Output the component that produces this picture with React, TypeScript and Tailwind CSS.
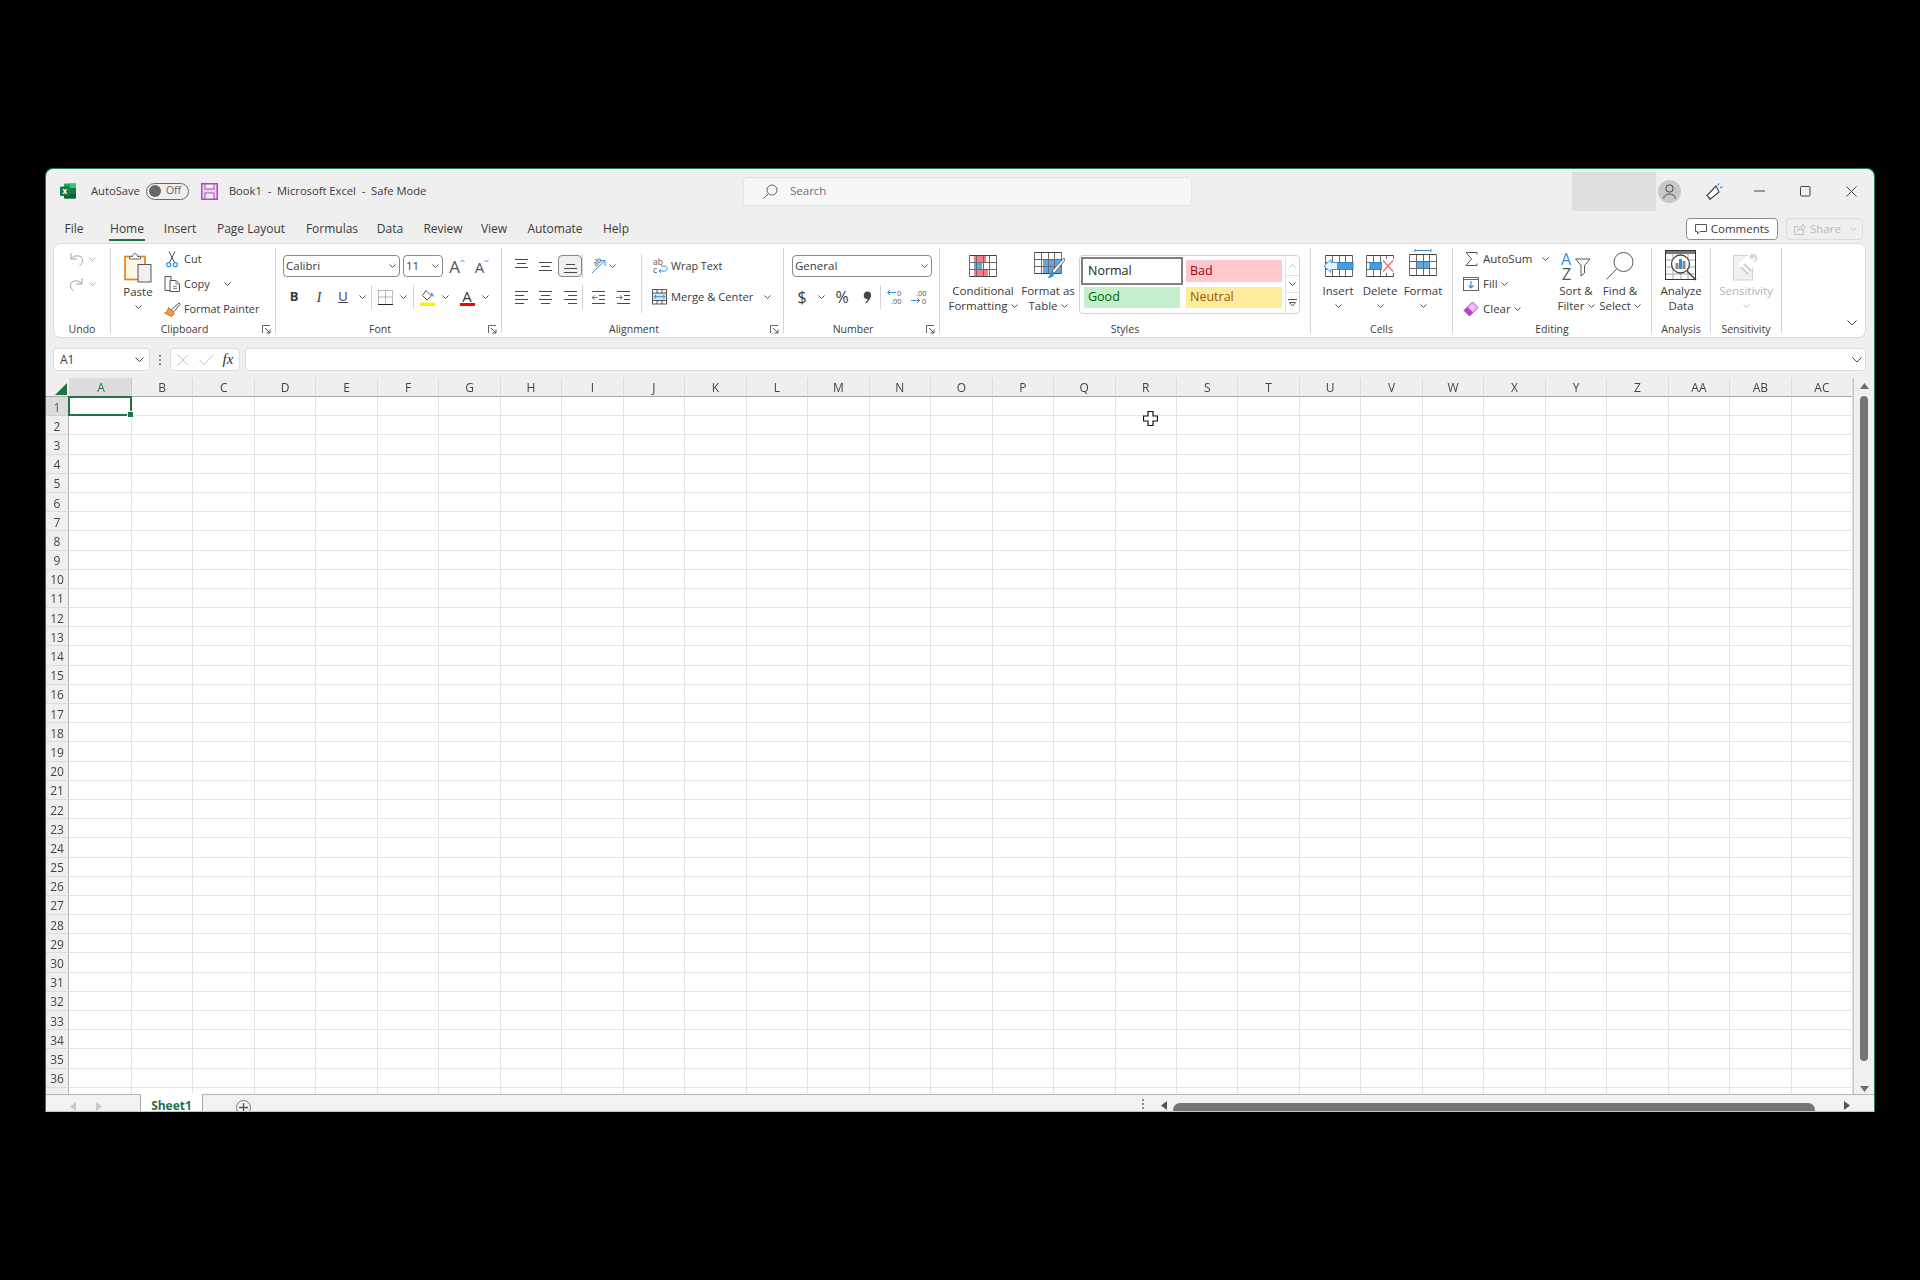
import React from "react";

const Chev = ({ c = "#555" }: { c?: string }) => (
  <svg width="7" height="4" viewBox="0 0 7 4" fill="none" className="shrink-0"><path d="M.5.5l3 3 3-3" stroke={c} /></svg>
);

const Slot = ({ className = "", children }: { className?: string; children?: React.ReactNode }) => (
  <div className={"flex items-center justify-center shrink-0 h-full " + className}>{children}</div>
);

const Sep = () => <div className="w-px h-[24px] bg-[#d4d4d4] shrink-0 self-center" />;

const Launcher = () => (
  <svg width="9" height="9" viewBox="0 0 9 9" fill="none" className="absolute right-[4px] bottom-[-1px]">
    <path d="M.5 8V.5H8" stroke="#666" /><path d="M3 3l5 5M8 4.5V8H4.5" stroke="#555" />
  </svg>
);

const Group = ({ w, label, launcher, children }: { w: string; label: string; launcher?: boolean; children: React.ReactNode }) => (
  <div className={"relative flex flex-col h-[85px] shrink-0 border-r border-[#d6d6d6] " + w}>
    <div className="flex h-[74px] shrink-0">{children}</div>
    <div className={"h-[16px] shrink-0 text-center text-[10.5px] leading-[15px] text-[#3a3a3a] " + (launcher ? "pr-[17px]" : "")}>{label}</div>
    {launcher && <Launcher />}
  </div>
);

const Big = ({ w, icon, lines, chev, muted }: { w: string; icon: React.ReactNode; lines: React.ReactNode[]; chev?: boolean; muted?: boolean }) => (
  <div className={"flex flex-col items-center shrink-0 whitespace-nowrap text-[11.5px] leading-[15px] " + w + (muted ? " text-[#b4b4b4]" : " text-[#3a3a3a]")}>
    <div className="h-[35px] flex items-center justify-center">{icon}</div>
    {lines.map((l, i) => <div key={i} className="flex items-center gap-[3px]">{l}</div>)}
    {chev && <div className="h-[15px] flex items-center"><Chev c={muted ? "#c0c0c0" : "#555"} /></div>}
  </div>
);

const SmallRow = ({ icon, text, children, className = "text-[11.5px]" }: { icon: React.ReactNode; text: string; children?: React.ReactNode; className?: string }) => (
  <div className={"flex items-center h-[22px] whitespace-nowrap text-[#3a3a3a] " + className}>
    <div className="w-[18px] flex justify-center shrink-0">{icon}</div>
    <span className="ml-[3px]">{text}</span>
    {children}
  </div>
);

const Lines = ({ rows }: { rows: [number, number, number][] }) => (
  <svg width="15" height="16" viewBox="0 0 15 16" fill="none">
    {rows.map(([x, y, l], i) => <path key={i} d={`M${x} ${y + 0.5}h${l}`} stroke="#4a4a4a" />)}
  </svg>
);

const Excel = () => (
  <svg width="17" height="16" viewBox="0 0 17 16">
    <rect x="4" y="0.5" width="12" height="15" rx="1" fill="#21A366" />
    <path d="M10 .5h5a1 1 0 011 1V5h-6z" fill="#33C481" />
    <path d="M4 11h12v3.500a1 1 0 01-1 1H5a1 1 0 01-1-1z" fill="#185C37" />
    <rect x="10" y="5" width="6" height="6" fill="#107C41" />
    <rect x="0" y="3.500" width="9.500" height="9.500" rx="1" fill="#107C41" />
    <text x="4.700" y="11" textAnchor="middle" fontSize="8" fontWeight="700" fill="#fff" fontFamily="Open Sans">x</text>
  </svg>
);

const Save = () => (
  <svg width="17" height="17" viewBox="0 0 17 17" fill="none">
    <rect x=".75" y=".75" width="15.500" height="15.500" fill="#EBD3F0" stroke="#B146C2" strokeWidth="1.500" />
    <rect x="4" y="1" width="9" height="5" fill="#F6EBF8" stroke="#B146C2" />
    <rect x="4" y="10" width="9" height="6" fill="#F6EBF8" stroke="#B146C2" />
  </svg>
);

const Undo = ({ flip }: { flip?: boolean }) => (
  <svg width="17" height="17" viewBox="0 0 17 17" fill="none" className={flip ? "-scale-x-100" : ""}>
    <path d="M3 2v6h6" stroke="#a0a0a0" />
    <path d="M3 8c3-4.500 11-4.500 11.500 1.500.1 2-1 3.500-3 5.500" stroke="#a0a0a0" />
  </svg>
);

const Paste = () => (
  <svg width="28" height="31" viewBox="0 0 28 31" fill="none">
    <rect x="1" y="4.500" width="20" height="23" fill="#FFF6E8" stroke="#E8821E" strokeWidth="1.700" />
    <path d="M5.500 7V4.500H8.500c0-4 5-4 5 0H16.500V7z" fill="#fff" stroke="#666" />
    <rect x="14" y="12.500" width="13" height="17.500" fill="#F0F0F0" stroke="#555" />
  </svg>
);

const Cut = () => (
  <svg width="12" height="17" viewBox="0 0 12 17" fill="none">
    <path d="M3 .5l5.500 11M9 .5L3.500 11.500" stroke="#555" />
    <circle cx="2.700" cy="13.700" r="2" stroke="#2F8FDC" strokeWidth="1.200" />
    <circle cx="9.300" cy="13.700" r="2" stroke="#2F8FDC" strokeWidth="1.200" />
  </svg>
);

const Copy = () => (
  <svg width="17" height="16" viewBox="0 0 17 16" fill="none">
    <path d="M1 .5h6v14H1z" stroke="#555" fill="#fff" />
    <path d="M6 4.500h6l3.500 3.500v7.500H6z" stroke="#555" fill="#fff" />
    <path d="M12 4.500V8h3.500M9 10.500h4M9 12.500h4" stroke="#888" />
  </svg>
);

const Painter = () => (
  <svg width="17" height="15" viewBox="0 0 17 15" fill="none">
    <path d="M7 8l8-7 1.200 1.200L9.500 10z" fill="#fff" stroke="#555" />
    <path d="M4.500 5.500l6 6-3 3-7-3.500c2.500-.5 3.300-3 4-5.500z" fill="#F39A3B" stroke="#D9761A" />
  </svg>
);

const GrowA = ({ up }: { up?: boolean }) => (
  <div className="flex items-start text-[#555] leading-none">
    <span className={up ? "text-[17px]" : "text-[15px] mt-[2px]"}>A</span>
    <svg width="5" height="4" viewBox="0 0 5 4" fill="none" className="mt-[1px]">
      <path d={up ? "M.5 3L2.500 1l2 2" : "M.5 1l2 2 2-2"} stroke="#3B8FD6" />
    </svg>
  </div>
);

const Borders = () => (
  <svg width="15" height="15" viewBox="0 0 15 15" fill="none">
    <path d="M.5.5h14v13M.5.5v13M7.500.5v13M.5 7h14" stroke="#777" strokeDasharray="1 1" />
    <path d="M0 14.500h15" stroke="#222" />
  </svg>
);

const Fill = () => (
  <svg width="16" height="17" viewBox="0 0 16 17" fill="none">
    <path d="M6 1.500l5.500 5.500-4.500 4-4.500-4.500z" fill="#fff" stroke="#555" />
    <path d="M11 3.500c2 1 3 2.500 2.500 4.500-.8-1-1.500-2-2.500-2.500z" fill="#2F8FDC" />
    <rect x="0" y="13.500" width="15" height="3.500" fill="#FFF200" />
  </svg>
);

const Indent = ({ inc }: { inc?: boolean }) => (
  <svg width="15" height="13" viewBox="0 0 15 13" fill="none">
    <path d="M1 .5h13M1 12.500h13M8 4.500h6M8 8.500h6" stroke="#4a4a4a" />
    <path d={inc ? "M0 6.500h6M4 4.500l2.500 2-2.500 2" : "M6.500 6.500H1M3.500 4.500L1 6.500l2.500 2"} stroke="#2F8FDC" />
  </svg>
);

const Orient = () => (
  <svg width="17" height="16" viewBox="0 0 17 16" fill="none" className="overflow-visible">
    <text x="5" y="9" fontSize="8" fill="#555" fontFamily="Open Sans" transform="rotate(-45 6 7)">ab</text>
    <path d="M3 15L15.500 3M10.500 2.500h5.500V8" stroke="#2F8FDC" />
  </svg>
);

const Wrap = () => (
  <svg width="15" height="16" viewBox="0 0 15 16" fill="none" className="overflow-visible">
    <text x="0" y="7" fontSize="8.500" fill="#555" fontFamily="Open Sans">ab</text>
    <text x="0" y="15" fontSize="8.500" fill="#555" fontFamily="Open Sans">c</text>
    <path d="M6 13h5.500c3.500 0 3.500-5 0-5H8M8 11l-2 2 2 2" stroke="#2F8FDC" />
  </svg>
);

const Merge = () => (
  <svg width="16" height="16" viewBox="0 0 16 16" fill="none">
    <rect x=".5" y=".5" width="14" height="14.500" fill="#fff" stroke="#555" />
    <rect x="1" y="4" width="13" height="7.500" fill="#CFE6F8" />
    <path d="M.5 4h14M.5 11.500h14M5 .5V4M10 .5V4M5 11.500V15M10 11.500V15" stroke="#555" />
    <path d="M2 7.700h11M4 6L2 7.700l2 1.800M11 6l2 1.700-2 1.800" stroke="#2F8FDC" />
  </svg>
);

const Decimal = ({ inc }: { inc?: boolean }) => (
  <svg width="17" height="16" viewBox="0 0 17 16" fill="none" className="overflow-visible">
    {inc ? (
      <>
        <path d="M10 3.500H1.500M4 1L1.500 3.500 4 6" stroke="#2F8FDC" />
        <text x="11" y="6.500" fontSize="7.500" fill="#555" fontFamily="Open Sans">0</text>
        <text x="5" y="14.500" fontSize="7.500" fill="#555" fontFamily="Open Sans">.00</text>
      </>
    ) : (
      <>
        <text x="5" y="6.500" fontSize="7.500" fill="#555" fontFamily="Open Sans">.00</text>
        <path d="M0 11.500h8.500M6 9l2.500 2.500L6 14" stroke="#2F8FDC" />
        <text x="11" y="14.500" fontSize="7.500" fill="#555" fontFamily="Open Sans">0</text>
      </>
    )}
  </svg>
);

const Comma = () => (
  <svg width="9" height="13" viewBox="0 0 9 13"><path d="M4 .5c3-.3 4.500 1.800 4 4.500-.4 2.700-2.500 5.500-5 7.500l-.8-.7C3.500 10.500 4.500 9.200 4.700 8 2.300 8.500.5 6.800.7 4.500.9 2 2.200.7 4 .5z" fill="#444" /></svg>
);

const GridLines = ({ w, h }: { w: number; h: number }) => {
  const xs = [0, 1, 2, 3, 4].map((i) => Math.round((i * (w - 1)) / 4) + 0.5);
  const ys = [0, 1, 2, 3].map((i) => Math.round((i * (h - 1)) / 3) + 0.5);
  return (
    <>
      {xs.map((x) => <path key={"x" + x} d={`M${x} .5V${h - 0.5}`} stroke="#6a6a6a" />)}
      {ys.map((y) => <path key={"y" + y} d={`M.5 ${y}H${w - 0.5}`} stroke={y === 0.5 || y === h - 0.5 ? "#444" : "#6a6a6a"} />)}
    </>
  );
};

const CondFmt = () => (
  <svg width="28" height="22" viewBox="0 0 28 22" fill="none">
    <rect x="5" y="0" width="12" height="7.500" fill="#F47C85" />
    <rect x="5" y="7.500" width="8" height="7" fill="#5CA8E6" />
    <rect x="5" y="14.500" width="14" height="7.500" fill="#F47C85" />
    <GridLines w={28} h={22} />
  </svg>
);

const FmtTable = () => (
  <svg width="31" height="27" viewBox="0 0 31 27" fill="none">
    <rect x="9" y="7" width="19" height="14" fill="#5CA8E6" />
    <GridLines w={28} h={22} />
    <path d="M30 6L18 19l2.500 2L31 8z" fill="#fff" stroke="#666" />
    <path d="M17.500 19.500l3 2.500c-.8 2.500-3.500 4.500-7 4 1.700-1 2.200-4.500 4-6.500z" fill="#3B8FD6" />
  </svg>
);

const InsertIco = () => (
  <svg width="31" height="22" viewBox="0 0 31 22" fill="none">
    <g transform="translate(2 0)"><GridLines w={28} h={22} /></g>
    <rect x="8" y="7.500" width="22" height="7" fill="#4C9BE0" stroke="#2F7FC4" />
    <path d="M14 7.500H8V4.500L1 11l7 6.500V14.500h6" fill="#E4F1FC" stroke="#4C9BE0" />
  </svg>
);

const DeleteIco = () => (
  <svg width="28" height="22" viewBox="0 0 28 22" fill="none">
    <GridLines w={28} h={22} />
    <rect x="4" y="7.500" width="13" height="7" fill="#4C9BE0" stroke="#2F7FC4" />
    <rect x="16" y="4" width="12" height="14" fill="#fff" />
    <path d="M17 5.500l10 11M27 5.500l-10 11" stroke="#F26A6A" strokeWidth="1.300" />
  </svg>
);

const FormatIco = () => (
  <svg width="28" height="27" viewBox="0 0 28 27" fill="none">
    <path d="M6 1.500h16M6 0v3M22 0v3" stroke="#3B8FD6" />
    <g transform="translate(0 5)">
      <rect x="7" y="7" width="14" height="7.500" fill="#5CA8E6" />
      <GridLines w={28} h={22} />
    </g>
  </svg>
);

const Sigma = () => (
  <svg width="13" height="14" viewBox="0 0 13 14" fill="none"><path d="M12 2.500V.5H1l5.500 6.500L1 13.500h11v-2" stroke="#555" /></svg>
);

const FillIco = () => (
  <svg width="16" height="14" viewBox="0 0 16 14" fill="none">
    <rect x=".5" y=".5" width="15" height="13" fill="#fff" stroke="#666" />
    <path d="M.5 2.500h15" stroke="#666" />
    <path d="M8 4v7M5.500 8.500L8 11l2.500-2.500" stroke="#2F8FDC" strokeWidth="1.200" />
  </svg>
);

const Eraser = () => (
  <svg width="16" height="16" viewBox="0 0 16 16" fill="none">
    <path d="M9.500 1L15 6.500 6.500 15 1 9.500z" fill="#E8BFEE" stroke="#B146C2" />
    <path d="M1 9.500L6.500 15l3.500-3.500L4.500 6z" fill="#B146C2" />
  </svg>
);

const SortIco = () => (
  <svg width="30" height="29" viewBox="0 0 30 29" fill="none" className="overflow-visible">
    <text x="0" y="14" fontSize="16" fill="#2F8FDC" fontFamily="Open Sans">A</text>
    <text x="1" y="28.500" fontSize="16" fill="#555" fontFamily="Open Sans">Z</text>
    <path d="M14.500 8h14.500l-5.500 6.500V22l-3.500 3V14.500z" fill="#fff" stroke="#555" />
  </svg>
);

const FindIco = () => (
  <svg width="30" height="30" viewBox="0 0 30 30" fill="none">
    <circle cx="18.500" cy="11" r="9.500" fill="#fff" stroke="#555" />
    <path d="M11.500 18L1.500 28.500" stroke="#555" />
  </svg>
);

const AnalyzeIco = () => (
  <svg width="32" height="31" viewBox="0 0 32 31" fill="none">
    <rect x=".5" y=".5" width="30" height="29" fill="#fff" stroke="#333" />
    <rect x="1" y="1" width="29" height="3" fill="#777" />
    <path d="M1 10h29M1 17h29M1 24h29M8 4v25M16 4v25M23 4v25" stroke="#aaa" />
    <circle cx="15.500" cy="14" r="9" fill="#fff" stroke="#444" strokeWidth="1.300" />
    <rect x="10.500" y="13" width="3" height="6" fill="#8a8a8a" />
    <rect x="14" y="9" width="3" height="10" fill="#2F8FDC" />
    <rect x="17.500" y="11" width="3" height="8" fill="#8a8a8a" />
    <path d="M22 21l9 9" stroke="#444" strokeWidth="1.500" />
  </svg>
);

const SensIco = () => (
  <svg width="27" height="30" viewBox="0 0 27 30" fill="none">
    <rect x=".5" y="4.500" width="19" height="24.500" fill="#f1f1f1" stroke="#d2d2d2" />
    <path d="M5 13l12-10 9 8-12 11z" fill="#fff" />
    <path d="M8 16l7 7M11 13l7 7" stroke="#d0d0d0" strokeWidth="2" />
    <path d="M16 6c2-4 5-4 7-2s2 5-1 7z" fill="#d8d8d8" />
    <path d="M19 10l3-3" stroke="#fff" strokeWidth="2" />
  </svg>
);

const Feedback = () => (
  <svg width="17" height="19" viewBox="0 0 17 19" fill="none">
    <path d="M1 13.500L10 4l3 6-8.500 7z" fill="#fff" stroke="#444" strokeWidth="1.100" />
    <path d="M3 15.500c-.5 1 .2 2 1.500 1.800" stroke="#444" />
    <path d="M12 3.500l1-2M14 6l2.500-1.500" stroke="#2F8FDC" strokeWidth="1.300" />
  </svg>
);

const Tri = ({ dir, c = "#6e6e6e" }: { dir: "u" | "d" | "l" | "r"; c?: string }) => {
  const p = { u: "M0 6L4.500 0 9 6z", d: "M0 0h9L4.500 6z", l: "M6 0v9L0 4.500z", r: "M0 0v9l6-4.500z" }[dir];
  const v = dir === "u" || dir === "d" ? ["9", "6"] : ["6", "9"];
  return <svg width={v[0]} height={v[1]} viewBox={`0 0 ${v[0]} ${v[1]}`} className="shrink-0"><path d={p} fill={c} /></svg>;
};

const tabs: [string, string][] = [
  ["File", "w-[44px]"], ["Home", "w-[62px]"], ["Insert", "w-[44px]"], ["Page Layout", "w-[98px]"], ["Formulas", "w-[64px]"],
  ["Data", "w-[52px]"], ["Review", "w-[54px]"], ["View", "w-[48px]"], ["Automate", "w-[74px]"], ["Help", "w-[48px]"],
];

const cols = ["A","B","C","D","E","F","G","H","I","J","K","L","M","N","O","P","Q","R","S","T","U","V","W","X","Y","Z","AA","AB","AC"];
const rows = Array.from({ length: 37 }, (_, i) => i + 1);

const StyleCell = ({ className, children }: { className: string; children: string }) => (
  <div className={"flex items-center pl-[4px] text-[12.5px] " + className}>{children}</div>
);

export default function App() {
  return (
    <div className="h-[1280px] overflow-hidden bg-black pt-[168px] pl-[45px] font-['Open_Sans','Liberation_Sans',sans-serif] text-[#3a3a3a]">
      <div className="relative w-[1830px] h-[944px] flex flex-col overflow-hidden rounded-t-[8px] border border-[#1f7a4c] border-b-[#c4c4c4] bg-[#efefef] blur-[0.35px]">
        {/* Title bar */}
        <div className="flex items-center h-[44px] shrink-0 text-[11.2px]">
          <div className="flex items-center w-[697px] shrink-0 whitespace-nowrap">
            <div className="ml-[14px]"><Excel /></div>
            <span className="ml-[14px]">AutoSave</span>
            <div className="ml-[6px] flex items-center w-[43px] h-[17px] rounded-full border border-[#666] pl-[2px]">
              <div className="w-[12px] h-[12px] rounded-full bg-[#666]" />
              <span className="ml-[5px] text-[10.5px] text-[#666]">Off</span>
            </div>
            <div className="ml-[12px]"><Save /></div>
            <span className="ml-[11px] whitespace-pre">Book1  -  Microsoft Excel  -  Safe Mode</span>
          </div>
          <div className="flex items-center w-[449px] h-[29px] shrink-0 rounded-[4px] border border-[#e4e4e4] bg-[#f7f7f7] pl-[19px] text-[#6e6e6e] text-[11.5px]">
            <svg width="15" height="15" viewBox="0 0 15 15" fill="none"><circle cx="9" cy="6" r="5" stroke="#666" /><path d="M5.500 9.500L.7 14.300" stroke="#666" /></svg>
            <span className="ml-[12px]">Search</span>
          </div>
          <div className="flex-1" />
          <div className="w-[84px] h-[39px] bg-[#dedede]" />
          <div className="ml-[2px] w-[23px] h-[23px] rounded-full bg-[#c8c8c8] flex items-center justify-center">
            <svg width="13" height="15" viewBox="0 0 13 15" fill="none"><circle cx="6.500" cy="4.500" r="3.700" stroke="#444" /><path d="M.7 14.500c.3-6 11.300-6 11.600 0" stroke="#444" /></svg>
          </div>
          <Slot className="w-[44px] ml-[11px]"><Feedback /></Slot>
          <Slot className="w-[46px]"><svg width="11" height="2"><path d="M0 1h11" stroke="#444" /></svg></Slot>
          <Slot className="w-[46px]"><svg width="11" height="11" fill="none"><rect x=".5" y=".5" width="9.500" height="9.500" rx="1" stroke="#444" /></svg></Slot>
          <Slot className="w-[46px]"><svg width="11" height="11" fill="none"><path d="M.5.500l10 10M10.500.500l-10 10" stroke="#444" /></svg></Slot>
        </div>

        {/* Tabs */}
        <div className="flex items-center h-[30px] shrink-0 pl-[6px] pt-[2px] text-[12px]">
          {tabs.map(([t, w]) => (
            <div key={t} className={"relative flex justify-center whitespace-nowrap " + w}>
              {t}
              {t === "Home" && <div className="absolute left-[13px] right-[13px] bottom-[-3px] h-[2px] bg-[#217346]" />}
            </div>
          ))}
          <div className="flex-1" />
          <div className="flex items-center justify-center gap-[4px] w-[92px] h-[22px] rounded-[4px] border border-[#8e8e8e] bg-white text-[11.5px]">
            <svg width="12" height="11" viewBox="0 0 12 11" fill="none"><path d="M.5.500h11v7H5L2.500 10V7.500h-2z" stroke="#555" /></svg>
            Comments
          </div>
          <div className="ml-[8px] mr-[11px] flex items-center w-[77px] h-[22px] rounded-[4px] border border-[#dcdcdc] pl-[7px] text-[11.5px] text-[#b8b8b8]">
            <svg width="12" height="12" viewBox="0 0 12 12" fill="none"><path d="M.5 3.500h4M.5 3.500v8h9V8M3.500 8c.5-3 3-4.500 5-4.500V1l3 3.500-3 3.500V5.800C7 5.800 5 6.500 3.500 8z" stroke="#c0c0c0" /></svg>
            <span className="ml-[4px]">Share</span>
            <div className="ml-[9px]"><Chev c="#c0c0c0" /></div>
          </div>
        </div>

        {/* Ribbon */}
        <div className="flex h-[95px] shrink-0 mx-[7px] w-[1813px] rounded-[8px] border border-[#dcdcdc] bg-white pt-[4px]">
          <Group w="w-[57px]" label="Undo">
            <div className="flex flex-col gap-[3px] pl-[13px]">
              <div className="flex items-center h-[22px]"><Slot className="w-[18px]"><Undo /></Slot><Slot className="w-[14px]"><Chev c="#b0b0b0" /></Slot></div>
              <div className="flex items-center h-[22px]"><Slot className="w-[18px]"><Undo flip /></Slot><Slot className="w-[14px]"><Chev c="#b0b0b0" /></Slot></div>
            </div>
          </Group>

          <Group w="w-[165px]" label="Clipboard" launcher>
            <div className="flex flex-col items-center w-[52px] shrink-0 pt-[4px] pl-[2px] text-[11.5px] leading-[16px]">
              <Paste />
              <div className="mt-[1px]">Paste</div>
              <div className="mt-[5px]"><Chev /></div>
            </div>
            <div className="flex flex-col gap-[3px]">
              <SmallRow className="text-[11px]" icon={<Cut />} text="Cut" />
              <SmallRow className="text-[11px]" icon={<Copy />} text="Copy"><div className="ml-[14px]"><Chev /></div></SmallRow>
              <SmallRow className="text-[10.8px]" icon={<Painter />} text="Format Painter" />
            </div>
          </Group>

          <Group w="w-[226px]" label="Font" launcher>
            <div className="flex flex-col gap-[9px] pt-[7px]">
              <div className="flex h-[22px]">
                <div className="ml-[7px] flex items-center justify-between w-[117px] rounded-[4px] border border-[#8a8a8a] pl-[2px] pr-[3px] text-[11.5px]">Calibri<Chev /></div>
                <div className="ml-[3px] flex items-center justify-between w-[40px] rounded-[4px] border border-[#8a8a8a] pl-[2px] pr-[3px] text-[11.5px]">11<Chev /></div>
                <Slot className="w-[28px]"><GrowA up /></Slot>
                <Slot className="w-[22px]"><GrowA /></Slot>
              </div>
              <div className="flex h-[22px] pl-[7px]">
                <Slot className="w-[22px] font-bold text-[13px]">B</Slot>
                <Slot className="w-[28px] italic text-[14px] font-['Liberation_Serif',serif]">I</Slot>
                <Slot className="w-[20px] underline text-[13px]">U</Slot>
                <Slot className="w-[18px]"><Chev /></Slot>
                <Sep />
                <Slot className="w-[26px]"><Borders /></Slot>
                <Slot className="w-[10px] mr-[5px]"><Chev /></Slot>
                <Sep />
                <Slot className="w-[28px]"><Fill /></Slot>
                <Slot className="w-[6px] mr-[7px]"><Chev /></Slot>
                <Slot className="w-[24px]">
                  <div className="flex flex-col items-center w-[15px] leading-none text-[15px]">
                    <span className="h-[13px]">A</span>
                    <div className="w-[15px] h-[3px] mt-[1px] bg-[#f00]" />
                  </div>
                </Slot>
                <Slot className="w-[12px]"><Chev /></Slot>
              </div>
            </div>
          </Group>

          <Group w="w-[282px]" label="Alignment" launcher>
            <div className="flex flex-col gap-[9px] pt-[7px] pl-[7px] w-[132px] shrink-0">
              <div className="flex h-[22px]">
                <Slot className="w-[24px]"><Lines rows={[[1, 1, 13], [3, 5, 9], [1, 9, 13]]} /></Slot>
                <Slot className="w-[25px]"><Lines rows={[[1, 4, 13], [3, 8, 9], [1, 12, 13]]} /></Slot>
                <Slot className="w-[24px] rounded-[4px] border border-[#888] bg-[#f0f0f0]"><Lines rows={[[3, 6, 9], [1, 10, 13], [1, 14, 13]]} /></Slot>
                <Sep />
                <Slot className="w-[20px] ml-[4px]"><Orient /></Slot>
                <Slot className="w-[10px]"><Chev /></Slot>
              </div>
              <div className="flex h-[22px]">
                <Slot className="w-[24px]"><Lines rows={[[1, 2, 13], [1, 6, 9], [1, 10, 13], [1, 14, 9]]} /></Slot>
                <Slot className="w-[25px]"><Lines rows={[[1, 2, 13], [3, 6, 9], [1, 10, 13], [3, 14, 9]]} /></Slot>
                <Slot className="w-[24px]"><Lines rows={[[1, 2, 13], [5, 6, 9], [1, 10, 13], [5, 14, 9]]} /></Slot>
                <Sep />
                <Slot className="w-[24px] ml-[3px]"><Indent /></Slot>
                <Slot className="w-[24px] ml-[1px]"><Indent inc /></Slot>
              </div>
            </div>
            <div className="w-px h-[59px] mt-[6px] ml-[7px] bg-[#d4d4d4] shrink-0" />
            <div className="flex flex-col gap-[9px] pt-[7px] pl-[9px] text-[10.8px] whitespace-nowrap">
              <div className="flex items-center h-[22px]"><Slot className="w-[18px]"><Wrap /></Slot><span className="ml-[2px]">Wrap Text</span></div>
              <div className="flex items-center h-[22px]"><Slot className="w-[18px]"><Merge /></Slot><span className="ml-[2px] text-[11.2px]">Merge &amp; Center</span><div className="ml-[11px]"><Chev /></div></div>
            </div>
          </Group>

          <Group w="w-[156px]" label="Number" launcher>
            <div className="flex flex-col gap-[9px] pt-[7px] pl-[8px]">
              <div className="flex items-center justify-between w-[140px] h-[22px] rounded-[4px] border border-[#8a8a8a] pl-[2px] pr-[3px] text-[11.5px]">General<Chev /></div>
              <div className="flex h-[22px]">
                <Slot className="w-[20px] text-[16px]">$</Slot>
                <Slot className="w-[18px]"><Chev /></Slot>
                <Slot className="w-[24px] text-[16px]">%</Slot>
                <Slot className="w-[26px]"><Comma /></Slot>
                <Sep />
                <Slot className="w-[26px]"><Decimal inc /></Slot>
                <Slot className="w-[24px]"><Decimal /></Slot>
              </div>
            </div>
          </Group>

          <Group w="w-[371px]" label="Styles">
            <Big w="w-[86px]" icon={<CondFmt />} lines={["Conditional", <>Formatting <Chev /></>]} />
            <Big w="w-[44px]" icon={<div className="ml-[3px]"><FmtTable /></div>} lines={["Format as", <>Table <Chev /></>]} />
            <div className="ml-[9px] mt-[7px] flex w-[221px] h-[59px] shrink-0 rounded-[4px] border border-[#d0d0d0]">
              <div className="grid grid-cols-[96px_96px] grid-rows-[22px_21px] gap-x-[6px] gap-y-[5px] pl-[4px] pt-[4px]">
                <StyleCell className="bg-white text-[#222] outline-2 outline-offset-[1px] outline-[#808080]">Normal</StyleCell>
                <StyleCell className="bg-[#FFC7CE] text-[#9C0006]">Bad</StyleCell>
                <StyleCell className="bg-[#C6EFCE] text-[#006100]">Good</StyleCell>
                <StyleCell className="bg-[#FFEB9C] text-[#9C5700]">Neutral</StyleCell>
              </div>
              <div className="ml-[3px] flex-1 flex flex-col border-l border-[#e2e2e2]">
                <div className="flex items-center justify-center h-[19px] shrink-0"><svg width="7" height="4" viewBox="0 0 7 4" fill="none"><path d="M.5 3.500l3-3 3 3" stroke="#c0c0c0" /></svg></div>
                <div className="flex items-center justify-center h-[18px] shrink-0 border-y border-[#e2e2e2]"><Chev /></div>
                <div className="flex items-center justify-center flex-1">
                  <svg width="9" height="8" viewBox="0 0 9 8" fill="none"><path d="M0 .5h9M1.500 3.500l3 3.500 3-3.500z" stroke="#555" /></svg>
                </div>
              </div>
            </div>
          </Group>

          <Group w="w-[142px]" label="Cells">
            <Big w="w-[54px]" icon={<InsertIco />} lines={["Insert"]} chev />
            <Big w="w-[30px]" icon={<DeleteIco />} lines={["Delete"]} chev />
            <Big w="w-[56px]" icon={<div className="-mt-[6px]"><FormatIco /></div>} lines={["Format"]} chev />
          </Group>

          <Group w="w-[199px]" label="Editing">
            <div className="flex flex-col gap-[3px] pl-[9px] w-[96px] shrink-0">
              <SmallRow icon={<Sigma />} text="AutoSum"><div className="ml-auto"><Chev /></div></SmallRow>
              <SmallRow icon={<FillIco />} text="Fill"><div className="ml-[3px]"><Chev /></div></SmallRow>
              <SmallRow icon={<Eraser />} text="Clear"><div className="ml-[3px]"><Chev /></div></SmallRow>
            </div>
            <Big w="w-[54px]" icon={<SortIco />} lines={["Sort &", <>Filter <Chev /></>]} />
            <Big w="w-[34px]" icon={<FindIco />} lines={["Find &", <>Select <Chev /></>]} />
          </Group>

          <Group w="w-[59px]" label="Analysis">
            <Big w="w-[58px]" icon={<AnalyzeIco />} lines={["Analyze", "Data"]} />
          </Group>

          <Group w="w-[71px]" label="Sensitivity">
            <Big w="w-[70px]" muted icon={<SensIco />} lines={["Sensitivity"]} chev />
          </Group>

          <div className="flex-1 flex justify-end items-end pr-[8px] pb-[7px] h-[85px]">
            <svg width="10" height="6" viewBox="0 0 10 6" fill="none"><path d="M.5.500L5 5 9.500.500" stroke="#444" /></svg>
          </div>
        </div>

        {/* Formula bar */}
        <div className="flex h-[23px] mt-[10px] mb-[7px] shrink-0 pl-[7px] pr-[8px]">
          <div className="flex items-center justify-between w-[97px] rounded-[4px] border border-[#dcdcdc] bg-white pl-[6px] pr-[5px] text-[12px]">
            A1
            <svg width="9" height="5" viewBox="0 0 9 5" fill="none"><path d="M.5.500l4 4 4-4" stroke="#444" /></svg>
          </div>
          <Slot className="w-[20px]"><svg width="2" height="10"><path d="M1 0v2M1 4v2M1 8v2" stroke="#888" strokeWidth="2" /></svg></Slot>
          <div className="flex items-center w-[70px] rounded-[4px] border border-[#dcdcdc] bg-white">
            <Slot className="w-[24px]"><svg width="12" height="12" fill="none"><path d="M.5.500l11 11M11.500.500l-11 11" stroke="#c4c4c4" /></svg></Slot>
            <Slot className="w-[22px]"><svg width="15" height="11" fill="none"><path d="M.5 6l4.500 4.500L14.500.500" stroke="#c4c4c4" /></svg></Slot>
            <Slot className="w-[22px] italic text-[15px] font-['Liberation_Serif',serif] text-[#333]">fx</Slot>
          </div>
          <div className="ml-[5px] flex-1 flex items-center justify-end rounded-[4px] border border-[#dcdcdc] bg-white pr-[3px]">
            <svg width="10" height="6" viewBox="0 0 10 6" fill="none"><path d="M.5.500L5 5 9.500.500" stroke="#444" /></svg>
          </div>
        </div>

        {/* Sheet */}
        <div className="flex h-[716px] shrink-0">
          <div className="w-[1807px] shrink-0 overflow-hidden bg-white grid grid-cols-[23px_63px_repeat(28,61.47px)] grid-rows-[19px_repeat(37,19.2px)]">
            <div className="bg-[#efefef] flex items-end justify-end pr-[2px] pb-[1px] border-b border-[#a8a8a8]">
              <svg width="12" height="12" viewBox="0 0 12 12"><path d="M12 0v12H0z" fill="#217346" /></svg>
            </div>
            {cols.map((c, i) => (
              <div key={c} className={"flex items-center justify-center pt-[2px] text-[12px] border-b border-r " + (i === 0 ? "pl-[2px] bg-[#dcdcdc] text-[#217346] border-b-[#a8a8a8] border-r-[#c8c8c8]" : "bg-[#efefef] text-[#444] border-b-[#a8a8a8] border-r-[#dcdcdc]")}>{c}</div>
            ))}
            {rows.map((r) => (
              <React.Fragment key={r}>
                <div className={"flex items-center justify-center pt-[3px] text-[12px] border-r border-b border-r-[#b4b4b4] " + (r === 1 ? "bg-[#dcdcdc] text-[#217346] border-b-[#d0d0d0]" : "bg-[#efefef] text-[#444] border-b-[#dcdcdc]")}>{r === 37 ? "" : r}</div>
                {cols.map((c, i) => (
                  <div key={c} className={"border-r border-b border-[#e3e3e3] " + (r === 1 && i === 0 ? "relative" : "")}>
                    {r === 1 && i === 0 && (
                      <div className="absolute -inset-px border-2 border-[#217346]">
                        <div className="absolute -right-[3px] -bottom-[3px] w-[5px] h-[5px] bg-[#217346] outline outline-white" />
                      </div>
                    )}
                  </div>
                ))}
              </React.Fragment>
            ))}
          </div>
          <div className="flex-1 flex flex-col items-center border-l border-[#c8c8c8] bg-[#f0f0f0]">
            <div className="mt-[5px]"><Tri dir="u" /></div>
            <div className="mt-[7px] w-[8px] h-[665px] rounded-full bg-[#757575]" />
            <div className="mt-[25px]"><Tri dir="d" /></div>
          </div>
        </div>

        {/* Sheet tabs */}
        <div className="flex flex-1 items-stretch bg-[#f2f2f2] border-t border-[#b4b4b4]">
          <div className="flex items-start gap-[20px] w-[95px] shrink-0 pl-[24px] pt-[7px] border-r border-[#a8a8a8]">
            <Tri dir="l" c="#c8c8c8" /><Tri dir="r" c="#c8c8c8" />
          </div>
          <div className="w-[62px] shrink-0 -mt-[1px] bg-white text-center text-[12px] font-bold leading-[24px] text-[#217346] border-r border-[#a8a8a8]">Sheet1</div>
          <div className="ml-[33px] mt-[5px] w-[15px] h-[15px] shrink-0 rounded-full border border-[#777] flex items-center justify-center">
            <svg width="9" height="9"><path d="M4.500 0v9M0 4.500h9" stroke="#555" strokeWidth="1.300" /></svg>
          </div>
          <div className="flex-1" />
          <div className="flex items-start w-[739px] shrink-0">
            <div className="flex justify-center w-[16px] pt-[4px]"><svg width="2" height="10"><path d="M1 0v2M1 4v2M1 8v2" stroke="#888" strokeWidth="2" /></svg></div>
            <div className="ml-[10px] pt-[6px]"><Tri dir="l" c="#555" /></div>
            <div className="ml-[6px] mt-[8px] w-[642px] h-[14px] rounded-full bg-[#757575]" />
            <div className="ml-[29px] pt-[6px]"><Tri dir="r" c="#555" /></div>
          </div>
        </div>

        {/* Mouse cursor */}
        <div className="absolute left-[1097px] top-[242px] pointer-events-none">
          <svg width="15" height="15" viewBox="0 0 15 15"><path d="M5 .5h5V5h4.500v5H10v4.500H5V10H.5V5H5z" fill="#fff" stroke="#111" strokeWidth="1.200" /></svg>
        </div>
      </div>
    </div>
  );
}
